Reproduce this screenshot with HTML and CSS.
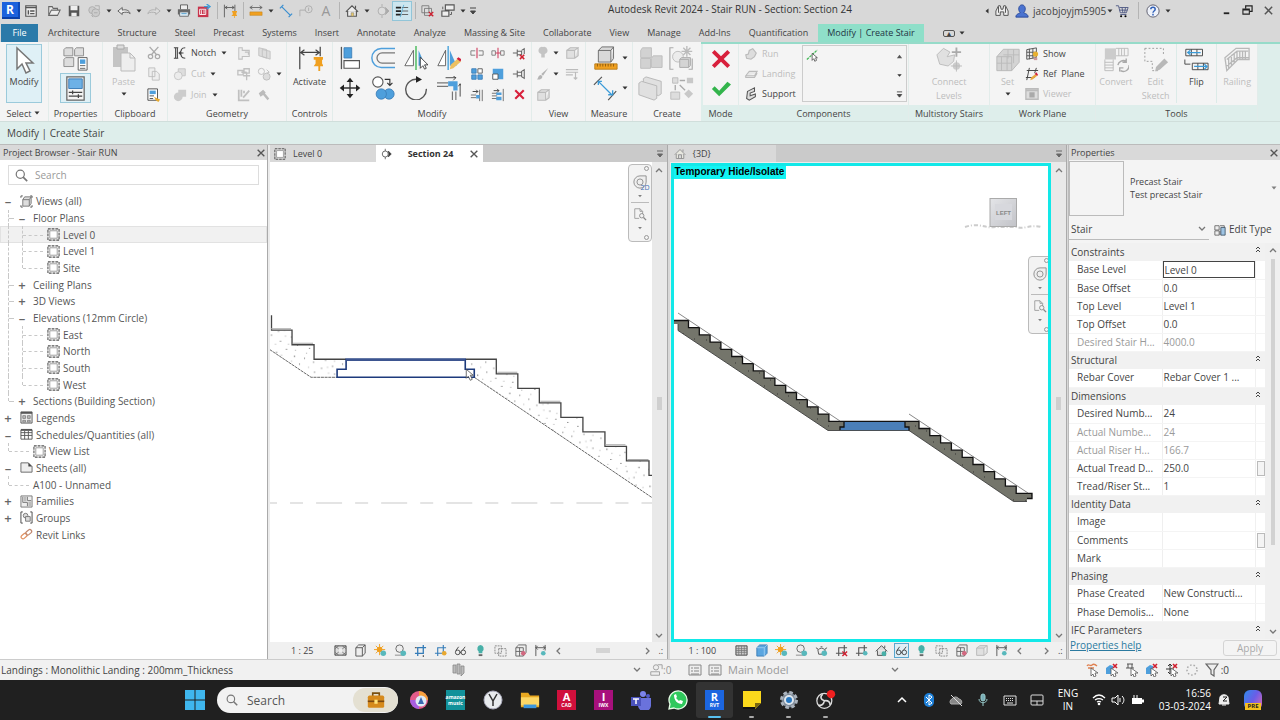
FILE: index.html
```html
<!DOCTYPE html>
<html lang="en">
<head>
<meta charset="utf-8">
<title>Autodesk Revit 2024 - Stair RUN</title>
<link rel="stylesheet" href="styles.css">
</head>
<body>
<svg class="defs" aria-hidden="true">
<defs>
<pattern id="concrete" width="43" height="37" patternUnits="userSpaceOnUse"><path d="M4 5h1M13 2h1M22 8h1M33 4h1M39 12h1M8 15h1M18 19h1M28 16h1M36 23h1M3 25h1M12 29h1M24 27h1M31 33h1M20 35h1M41 31h1" stroke="#555"/><path d="M9 9h1M17 11h1M27 3h1M37 17h1M5 20h1M23 22h1M14 24h1M33 28h1M7 34h1M40 6h1M26 34h1M30 11h1" stroke="#aaa"/></pattern>
<pattern id="aggregate" width="29" height="23" patternUnits="userSpaceOnUse"><rect width="29" height="23" fill="#74756b"/><path d="M4 5h1M15 12h1M22 3h1M9 18h1M26 17h1" stroke="#333"/></pattern>
<linearGradient id="cube" x2="1" y2="1"><stop stop-color="#e4e5e8"/><stop offset="1" stop-color="#c2c3c8"/></linearGradient>
</defs>
<symbol id="cursor" viewBox="0 0 20 28"><path d="M3 2v21l5-5 4 9 4-2-4-8h7z" fill="#fff" stroke="#777" stroke-width="1.500"/></symbol>
<symbol id="caret" viewBox="0 0 8 8"><path d="M1.500 2.500h5L4 5.500z" fill="#333"/></symbol>
<symbol id="caretup" viewBox="0 0 8 8"><path d="M1 6h6L4 2z" fill="#555"/></symbol>
<symbol id="caretbar" viewBox="0 0 8 8"><path d="M1 1h6M1.500 4h5L4 7z" fill="currentColor" stroke="currentColor"/></symbol>
<symbol id="home" viewBox="0 0 16 16"><path d="M3 8v6h10V8M1 9l7-7 7 7M12 5V2" fill="#eee" stroke="#555" stroke-width="1.300"/><path d="M7 10h3v4H7z" fill="#e9c96a" stroke="#777" stroke-width=".6"/></symbol>
<symbol id="homegrey" viewBox="0 0 16 16"><path d="M3 8v6h10V8M1 9l7-7 7 7M12 5V2M6 14v-5h4v5" fill="#e8e8df" stroke="#909090" stroke-width="1.200"/></symbol>
<symbol id="homet" viewBox="0 0 16 16"><path d="M3 8v6h10V8M1 9l7-7 7 7M12 5V2" fill="#ddd" stroke="#555" stroke-width="1.200"/><circle cx="11" cy="12" r="3" fill="#48b0a8"/></symbol>
<symbol id="win" viewBox="0 0 16 16"><path d="M2 2h12v12H2z" fill="#eee" stroke="#555" stroke-width="1.300"/><path d="M2 4h12M5 7v5M7 8h5M7 11h5" stroke="#555" stroke-width="1.600"/></symbol>
<symbol id="open" viewBox="0 0 16 16"><path d="M2 13V3h4l1 2h5v2M2 13L5 7h10l-3 6z" fill="#eee" stroke="#666" stroke-width="1.200"/></symbol>
<symbol id="save" viewBox="0 0 16 16"><path d="M2 2h12v12H2z" fill="#555"/><path d="M4 2h8v5H4zM5 10h6v4H5z" fill="#eee"/></symbol>
<symbol id="sync" viewBox="0 0 16 16"><circle cx="6" cy="7" r="4" fill="#ccc" stroke="#aaa"/><circle cx="10" cy="10" r="4.500" fill="#ccc" stroke="#aaa"/><path d="M9 2h5v5M5 13l2 2M8 10h4" stroke="#aaa" fill="none"/></symbol>
<symbol id="undo" viewBox="0 0 16 16"><path d="M1 8l5-4v3c4-1 8 0 9 4-2-2-5-2-9-1v2z" fill="#eee" stroke="#555"/></symbol>
<symbol id="redo" viewBox="0 0 16 16"><path d="M15 8l-5-4v3c-4-1-8 0-9 4 2-2 5-2 9-1v2z" fill="#ddd" stroke="#aaa"/></symbol>
<symbol id="print" viewBox="0 0 16 16"><path d="M4 6V1h8v5" fill="#eee" stroke="#555"/><path d="M1 6h14v6H1z" fill="#666"/><path d="M3 9h10v5H3z" fill="#ddeef8" stroke="#666"/><path d="M5 11h6" stroke="#4998c8"/></symbol>
<symbol id="pdf" viewBox="0 0 16 16"><path d="M1 3h12v12H1z" fill="#c8344c"/><path d="M3 6h7v6H3zM5 7v5M8 7v4" fill="none" stroke="#fff"/><path d="M8 3h5M11 0l4 3-4 3" stroke="#3b9bd8" stroke-width="1.500" fill="none"/></symbol>
<symbol id="dim" viewBox="0 0 20 20"><path d="M2 1v18M17 1v9M3 5h13M6 3L3 5l3 2M13 3l3 2-3 2" fill="none" stroke="#555" stroke-width="1.200"/><path d="M13 10h7v2h-1v3l2 2h-9l2-2v-3h-1zM16 17h1v3h-1z" fill="#f0a020"/></symbol>
<symbol id="measure" viewBox="0 0 16 16"><path d="M1 4h14M4 2L1 4l3 2M12 2l3 2-3 2" stroke="#666" fill="none"/><path d="M1 9h14v4H1z" fill="#f0a020" stroke="#b77b18" stroke-width=".5"/></symbol>
<symbol id="aligned" viewBox="0 0 16 16"><path d="M1 5l4-4M3 3l10 10M11 15l4-4" stroke="#3b8fd0" stroke-width="1.400" fill="none"/></symbol>
<symbol id="tag" viewBox="0 0 16 16"><circle cx="11" cy="6" r="4" fill="none" stroke="#aaa"/><path d="M1 14V7h6M11 4v4" stroke="#aaa" fill="none"/></symbol>
<symbol id="marker" viewBox="0 0 16 16"><circle cx="8" cy="8" r="4.500" fill="#ddd" stroke="#aaa"/><path d="M8 0v3M8 13v3M12 4l4 4-4 4 1-4z" fill="#aaa" stroke="#aaa"/></symbol>
<symbol id="section" viewBox="0 0 16 16"><circle cx="7" cy="8" r="4" fill="#fff" stroke="#444"/><path d="M7 1v3M7 12v3M11 4l4 4-4 4 1-4z" fill="#333" stroke="#444"/></symbol>
<symbol id="thin" viewBox="0 0 16 16"><path d="M1 4h6M1 8h6M1 12h6" stroke="#222" stroke-width="2"/><path d="M8 4h7M8 8h7M8 12h7" stroke="#555"/><path d="M10 1L6 15" stroke="#5bb0d8"/></symbol>
<symbol id="closewin" viewBox="0 0 16 16"><path d="M1 2h8v8H1zM4 5h8v8H4z" fill="#ddd" stroke="#777"/><path d="M9 9l5 5M14 9l-5 5" stroke="#d02030" stroke-width="1.600"/></symbol>
<symbol id="switch" viewBox="0 0 16 16"><path d="M5 1h10v6H5zM1 8h8v6H1z" fill="#eee" stroke="#555" stroke-width="1.300"/><path d="M2 6V3M12 9v3h-2" stroke="#555" fill="none"/></symbol>
<symbol id="binoc" viewBox="0 0 16 16"><path d="M1 13V8l3-6h2l1 4h2l1-4h2l3 6v5h-5V9H6v4zM4 3v7M12 3v7" fill="#eee" stroke="#444"/></symbol>
<symbol id="user" viewBox="0 0 16 16"><path d="M1 15c0-4 4-4 5-5C3 7 4 1 8 1s5 6 2 9c1 1 5 1 5 5z" fill="#4b73d0" stroke="#284898"/></symbol>
<symbol id="cart" viewBox="0 0 16 16"><path d="M1 2h3l2 8h7l2-6H5M6 12h7M5 7h9M8 4l1 6M12 4l-1 6" fill="none" stroke="#4a5580"/><circle cx="7" cy="14" r="1.200"/><circle cx="12" cy="14" r="1.200"/></symbol>
<symbol id="help" viewBox="0 0 16 16"><circle cx="8" cy="8" r="7" fill="#eef2fa" stroke="#556" /><path d="M5.500 6c0-3 5-3 5 0 0 2-2.500 2-2.500 4M8 11v2" fill="none" stroke="#3060b8" stroke-width="1.700"/></symbol>
<symbol id="min" viewBox="0 0 12 12"><path d="M3 9h6" stroke="#222" stroke-width="2"/></symbol>
<symbol id="restore" viewBox="0 0 12 12"><path d="M4 4V1h7v6H8" fill="none" stroke="#222" stroke-width="1.300"/><path d="M1 4.500h7V10H1zM1 5.500h7" fill="none" stroke="#222" stroke-width="1.200"/></symbol>
<symbol id="x" viewBox="0 0 12 12"><path d="M2 2l8 8M10 2l-8 8" stroke="#555" stroke-width="1.600"/></symbol>
<symbol id="types" viewBox="0 0 28 28"><path d="M1 4l2-2h8v9H1zM13 4l2-2h8v9H13zM1 15l2-2h9v10H1z" fill="#ddd" stroke="#888"/><path d="M17 13h10v14H17z" fill="#fff" stroke="#555"/><path d="M19 15h6v5h-6z" fill="#4e9fdc"/><path d="M19 22h6M19 25h6" stroke="#555"/></symbol>
<symbol id="props" viewBox="0 0 20 26"><path d="M1 1h18v24H1z" fill="#f4f4f4" stroke="#666" stroke-width="1.300"/><path d="M3 3h14v10H3z" fill="#6db1e6" stroke="#3d7eb8"/><path d="M3 17h14M3 21h14M7 15v4M13 19v4" stroke="#444" stroke-width="1.300"/></symbol>
<symbol id="paste" viewBox="0 0 24 28"><path d="M1 3h15v20H1z" fill="#c4c4c4"/><path d="M5 1h7v4H5z" fill="#ddd" stroke="#aaa"/><path d="M9 9h9l5 5v13H9z" fill="#eee" stroke="#bbb"/><path d="M18 9v5h5" fill="none" stroke="#bbb"/></symbol>
<symbol id="cut" viewBox="0 0 16 16"><path d="M3 1l8 9M13 1L5 10" stroke="#aaa" stroke-width="1.500"/><circle cx="4" cy="12" r="2.500" fill="none" stroke="#aaa" stroke-width="1.400"/><circle cx="12" cy="12" r="2.500" fill="none" stroke="#aaa" stroke-width="1.400"/></symbol>
<symbol id="copyg" viewBox="0 0 16 16"><path d="M2 1h7v10H2zM6 5h5l3 3v7H6z" fill="#eee" stroke="#bbb"/></symbol>
<symbol id="matchp" viewBox="0 0 16 16"><path d="M1 1h11v13H1z" fill="#fff" stroke="#444"/><path d="M3 3h7v4H3z" fill="#4e9fdc"/><path d="M3 9h5M3 12h4" stroke="#444"/><path d="M8 10l4 2 3 1-2 3-3-2z" fill="#e8aa30"/></symbol>
<symbol id="notch" viewBox="0 0 16 16"><path d="M1 2h5M1 14h5M3 2v12M5 2v12M14 2c-5 0-5 3-5 6s0 6 5 6M12 8H7M10 5L7 8l3 3" fill="none" stroke="#444" stroke-width="1.200"/></symbol>
<symbol id="boolg" viewBox="0 0 16 16"><path d="M6 2h8v8H6z" fill="#ddd" stroke="#c4c4c4"/><circle cx="6" cy="10" r="4.500" fill="#ececec" stroke="#c4c4c4"/></symbol>
<symbol id="joing" viewBox="0 0 16 16"><path d="M6 2h9v8h-4a5 5 0 1 1-5-5z" fill="#ccc"/></symbol>
<symbol id="cope" viewBox="0 0 16 16"><path d="M2 2h4v3h8v7H6v3H2zM9 7h4v3" fill="#eee" stroke="#c0c0c0" stroke-width="1.200"/></symbol>
<symbol id="planes" viewBox="0 0 16 16"><path d="M2 2l9 2v10l-9-3zM6 4l9 2v9l-9-3z" fill="#ddd" stroke="#c0c0c0"/></symbol>
<symbol id="wallj" viewBox="0 0 16 16"><path d="M1 4h6v5H1zM8 2h6v5H8zM7 10h8M5 6h6M11 6v9" fill="none" stroke="#c0c0c0" stroke-width="1.500"/></symbol>
<symbol id="split" viewBox="0 0 16 16"><circle cx="5" cy="5" r="3.500" fill="none" stroke="#bbb"/><circle cx="11" cy="11" r="4" fill="#ddd" stroke="#bbb"/><path d="M11 3l3 3-3 1" stroke="#bbb" fill="none"/></symbol>
<symbol id="paint" viewBox="0 0 16 16"><path d="M2 2v12h12M5 2v8M14 3l-7 8M8 3v3" stroke="#c0c0c0" stroke-width="2" fill="none"/></symbol>
<symbol id="hammer" viewBox="0 0 16 16"><path d="M2 6l5-4 3 3-1 1 5 6-2 2-5-6-3 2z" fill="#bbb"/></symbol>
<symbol id="pinact" viewBox="0 0 28 28"><path d="M3 2v24M25 2v10M4 8h20M8 5L4 8l4 3M20 5l4 3-4 3" fill="none" stroke="#444" stroke-width="1.300"/><path d="M18 13h11v3h-2v4l2 3H18l2-3v-4h-2zM23 23h2v5h-2z" fill="#f0a020"/></symbol>
<symbol id="align" viewBox="0 0 28 28"><path d="M4 1v26" stroke="#555" stroke-width="1.500"/><path d="M7 2h9v12H7z" fill="#4e9fdc" stroke="#3d7eb8"/><path d="M7 17h18v9H7z" fill="#fff" stroke="#555" stroke-width="1.300"/></symbol>
<symbol id="offset" viewBox="0 0 28 28"><path d="M28 3H12a11 11 0 0 0 0 22h16" fill="none" stroke="#4e9fdc" stroke-width="1.700"/><path d="M28 8H13a6 6 0 0 0 0 12h15" fill="none" stroke="#777" stroke-width="1.500"/></symbol>
<symbol id="mirror" viewBox="0 0 28 28"><path d="M11 5v18H1z" fill="#fff" stroke="#555"/><path d="M17 5v18h8z" fill="#4e9fdc"/><path d="M14 0v28" stroke="#35b44c" stroke-width="1.500"/><path d="M19 13v13l3-3 2 4 2-1-2-4h4z" fill="#fff" stroke="#333"/></symbol>
<symbol id="mirrord" viewBox="0 0 28 28"><path d="M10 5v18H1z" fill="#fff" stroke="#555"/><path d="M15 5v18h8z" fill="#4e9fdc"/><path d="M13 0v28" stroke="#3b9bd8" stroke-width="1.500"/><path d="M15 27l1-5 8-7 4 3-9 8z" fill="#edc060"/><path d="M23 15l2-2 4 3-2 2z" fill="#d02040"/></symbol>
<symbol id="move" viewBox="0 0 28 28"><path d="M14 4v20M4 14h20" stroke="#333" stroke-width="1.500"/><path d="M14 2l4 5h-8zM14 26l4-5h-8zM2 14l5-4v8zM26 14l-5-4v8z" fill="#222"/></symbol>
<symbol id="copy" viewBox="0 0 28 28"><circle cx="8" cy="7" r="6" fill="#fff" stroke="#555" stroke-width="1.300"/><circle cx="21" cy="21" r="6" fill="#4e9fdc" stroke="#3d7eb8"/><circle cx="12" cy="21" r="6" fill="#4e9fdc" stroke="#3d7eb8"/><path d="M16 4h6v6M19 8l3 3 3-3" fill="none" stroke="#333" stroke-width="1.300"/></symbol>
<symbol id="rotate" viewBox="0 0 28 28"><path d="M16 4a12 12 0 1 0 10 11" fill="none" stroke="#555" stroke-width="1.600"/><path d="M14 0l7 4-7 4z" fill="#222"/></symbol>
<symbol id="trim" viewBox="0 0 28 28"><path d="M0 8h13M0 12h13M18 28V18M22 28V18" stroke="#777" stroke-width="1.400"/><path d="M13 6h11v11h-5v-5h-6z" fill="#4e9fdc"/><path d="M10 2h12M19 0l3 2-3 3M27 24V10M25 12l2-3 2 3" fill="none" stroke="#333"/></symbol>
<symbol id="splitel" viewBox="0 0 16 16"><path d="M6 5.500H1v5h5M10 5.500h5v5h-5" fill="none" stroke="#777"/><path d="M8 2v12" stroke="#d04060" stroke-width="1.300"/></symbol>
<symbol id="splitgap" viewBox="0 0 16 16"><path d="M5 5.500H1v5h4zM11 5.500h4v5h-4z" fill="none" stroke="#777"/><path d="M8 2v12M5 8h6" stroke="#d04060" stroke-width="1.200"/></symbol>
<symbol id="pin" viewBox="0 0 16 16"><path d="M1 8h5M6 4v8M6 6h5v4H6M11 5l3-2v10l-3-2z" fill="none" stroke="#666" stroke-width="1.200"/></symbol>
<symbol id="unpin" viewBox="0 0 16 16"><path d="M1 8h5M6 4v8M6 6h5v4H6M11 5l3-2v6" fill="none" stroke="#666" stroke-width="1.200"/><path d="M9 10l5 5M14 10l-5 5" stroke="#d02030" stroke-width="1.700"/></symbol>
<symbol id="array" viewBox="0 0 16 16"><path d="M2 2h5v5H2zM2 9h5v5H2zM9 9h5v5H9z" fill="#4e9fdc" stroke="#3d7eb8"/><path d="M9 2h5v5H9z" fill="#fff" stroke="#555"/></symbol>
<symbol id="scale" viewBox="0 0 16 16"><path d="M2 2h12v12H2z" fill="#4e9fdc"/><path d="M2 8h6v6H2z" fill="#fff" stroke="#555"/></symbol>
<symbol id="trim1" viewBox="0 0 16 16"><path d="M1 8h6M1 11h6M14 2v13M11 2v13" stroke="#666"/><path d="M7 8h4v4H7z" fill="#4e9fdc"/><path d="M3 4h6M7 2l2 2-2 2" fill="none" stroke="#333"/></symbol>
<symbol id="trim2" viewBox="0 0 16 16"><path d="M1 6h6M1 9h6M1 12h6M14 1v14" stroke="#666"/><path d="M6 5h6v3H6zM6 10h6v4H6z" fill="#4e9fdc"/><path d="M3 3h6M7 1l2 2-2 2" fill="none" stroke="#333"/></symbol>
<symbol id="redx" viewBox="0 0 22 22"><path d="M1 4l3-3 7 7 7-7 3 3-7 7 7 7-3 3-7-7-7 7-3-3 7-7z" fill="#d8203c"/></symbol>
<symbol id="check" viewBox="0 0 22 18"><path d="M1 9l3-3 5 5L18 1l4 3L9 17z" fill="#33b44c"/></symbol>
<symbol id="bulbg" viewBox="0 0 16 16"><path d="M8 1a4 4 0 0 0-2 8v4h4V9a4 4 0 0 0-2-8z" fill="#c4c4c4"/></symbol>
<symbol id="boxg" viewBox="0 0 16 16"><path d="M2 5h9v9H2zM2 5l4-3h9l-4 3M15 2v9l-4 3" fill="#e0e0e0" stroke="#bbb" stroke-width="1.200"/></symbol>
<symbol id="brushg" viewBox="0 0 16 16"><path d="M14 1L6 8l2 2zM5 9c-3 1-2 4-4 5 4 1 7-1 6-4z" fill="#b4b4b4"/></symbol>
<symbol id="linesg" viewBox="0 0 16 16"><path d="M1 3h14M1 6h14M1 9h8M12 6v8M10 12l2 2 2-2" fill="none" stroke="#bbb" stroke-width="1.300"/></symbol>
<symbol id="ruler" viewBox="0 0 28 28"><path d="M6 5h14v13H6zM6 5l4-4h13l-3 4M23 1v13l-3 4" fill="#d9d9d9" stroke="#666"/><path d="M2 20h25v6H2z" fill="#f0a020" stroke="#b87a18"/><path d="M5 20v3M8 20v3M11 20v3M14 20v3M17 20v3M20 20v3M23 20v3" stroke="#8c5a10"/></symbol>
<symbol id="dimal" viewBox="0 0 28 28"><path d="M1 10L10 1M17 27l9-10" stroke="#555" stroke-width="1.300"/><path d="M6 6l15 15M6 10V6h4M17 21h5v-5" fill="none" stroke="#3b9bd8" stroke-width="1.500"/></symbol>
<symbol id="groupg" viewBox="0 0 28 28"><path d="M3 5l2-3h10v11H3zM3 14h11v11H3zM15 14l2-3h10v13H15z" fill="#d2d2d2" stroke="#bcbcbc"/></symbol>
<symbol id="sunbox" viewBox="0 0 28 28"><path d="M5 2H1v24h4M22 26h4V14" fill="none" stroke="#aaa" stroke-width="1.300"/><circle cx="10" cy="12" r="6" fill="#ececec" stroke="#bbb"/><path d="M12 15h10v9H12zM12 15l2-2h10v9l-2 2" fill="#d4d4d4" stroke="#aaa"/><path d="M20 0v12M14 6h12M16 2l8 8M24 2l-8 8" stroke="#bbb" stroke-width="1.500"/></symbol>
<symbol id="slabg" viewBox="0 0 28 28"><path d="M6 3l3-2 17 5v14l-3 2L6 16z" fill="#e0e0e0" stroke="#b4b4b4"/><path d="M1 8l3-2 17 5v14l-3 2L1 21z" fill="#e0e0e0" stroke="#b4b4b4"/></symbol>
<symbol id="flow" viewBox="0 0 28 28"><path d="M4 2h6v6H4zM2 18h10v8H2z" fill="#ddd" stroke="#bbb"/><path d="M20 2h7v6h-7zM22 15l5 5-5 5-5-5z" fill="#c8c8c8"/><path d="M12 5h6M7 10v6M12 10l6 6" stroke="#aaa" stroke-width="1.500"/></symbol>
<symbol id="rung" viewBox="0 0 16 16"><path d="M2 9l3-1 1-4 4-2 4 5-2 4-4 3-5-1z" fill="#ddd" stroke="#bbb" stroke-width="1.300"/></symbol>
<symbol id="landg" viewBox="0 0 16 16"><path d="M2 10l4-5h9l-3 5zM2 10v2h10l3-5" fill="#e8e8e8" stroke="#bbb" stroke-width="1.200"/></symbol>
<symbol id="support" viewBox="0 0 16 16"><path d="M4 5l8-4v4L7 7v3l6-2v3l-7 4-3-2z" fill="#ddd" stroke="#555" stroke-width="1.200"/></symbol>
<symbol id="sketch" viewBox="0 0 16 16"><path d="M1 12L13 1" stroke="#44b858" stroke-width="1.500" stroke-dasharray="3 1"/><path d="M7 5v8l2-2 1 3 2-1-1-3h2z" fill="#fff" stroke="#333" stroke-width=".8"/></symbol>
<symbol id="connect" viewBox="0 0 28 28"><path d="M1 9l7-7 7 4-3 5 8-2-1 7-6 5-9-2z" fill="#e0e0e0" stroke="#bbb"/><path d="M22 1v10M17 6h10" stroke="#aaa" stroke-width="2" fill="none"/><circle cx="22" cy="21" r="4" fill="#ccc"/><path d="M22 15v12M16 21h12" stroke="#bbb"/></symbol>
<symbol id="setg" viewBox="0 0 28 28"><path d="M2 11h16v15H2zM2 11l7-8h17v14l-8 9" fill="#d4d4d4" stroke="#b8b8b8"/><path d="M7 11v15M13 11v15M2 18h16M14 3v10M20 3v15M9 9h17" stroke="#bbb" fill="none"/></symbol>
<symbol id="show" viewBox="0 0 16 16"><path d="M2 3l11-2v11L2 14zM5 2v12M9 2v11M2 6h11M2 10h11" fill="none" stroke="#555" stroke-width="1.100"/><circle cx="12" cy="8" r="3" fill="#e8b030"/><path d="M10 12h4v3h-4z" fill="#c99"/></symbol>
<symbol id="refp" viewBox="0 0 16 16"><path d="M2 4h13M1 12h10M5 1L2 15M13 1l-2 6" fill="none" stroke="#444" stroke-width="1.100"/><path d="M6 15l1-3 5-4 2 2-5 4z" fill="#e9a840"/><path d="M11 8l2-2 2 3-1 1z" fill="#d02040"/></symbol>
<symbol id="viewer" viewBox="0 0 16 16"><path d="M1 2h14v12H1zM1 4h14" fill="#ddd" stroke="#bbb" stroke-width="1.500"/><path d="M5 6h6v6H5z" fill="#aaa"/></symbol>
<symbol id="convert" viewBox="0 0 28 28"><path d="M2 2h12v12H2z" fill="#ccc"/><path d="M14 2h13v8H14M17 2v8M20 2v8M23 2v8M2 14v12h9V14M2 17h9M2 20h9M2 23h9" fill="none" stroke="#bbb"/><path d="M16 20a6 6 0 0 1 9-4M28 20a6 6 0 0 1-9 6M25 13v4h-4M18 27v-4h4" fill="none" stroke="#aaa" stroke-width="1.500"/></symbol>
<symbol id="esketch" viewBox="0 0 28 28"><path d="M2 2h20v8M2 2v14h8v10h6" fill="none" stroke="#999" stroke-dasharray="2 2"/><path d="M13 27l1-5 9-9 4 4-9 8z" fill="#b8b8b8"/></symbol>
<symbol id="flip" viewBox="0 0 28 28"><path d="M3 3h18M3 10h18M3 3v7M9 3v7M15 3v7M21 3v7M10 18h17M10 25h17M10 18v7M16 18v7M22 18v7M27 18v7M2 14v5h6" fill="none" stroke="#444"/><path d="M5 6.500h14M8 4L5 6.500 8 9M12 21.500h14M23 19l3 2.500-3 3" fill="none" stroke="#3b9bd8" stroke-width="1.300"/></symbol>
<symbol id="railing" viewBox="0 0 28 28"><path d="M1 12L13 2h14v12H15L3 26zM3 14L14 5h12M3 21l11-9h13M5 12v12M8 9v12M11 7v11M14 5v9M17 5v9M20 5v9M23 5v9" fill="none" stroke="#b8b8b8" stroke-width="1.400"/></symbol>
<symbol id="glass" viewBox="0 0 16 16"><circle cx="6.500" cy="6.500" r="5" fill="none" stroke="#777" stroke-width="1.500"/><path d="M10 10l5 5" stroke="#777" stroke-width="2"/></symbol>
<symbol id="plan" viewBox="0 0 14 14"><path d="M1 1h12v12H1z" fill="none" stroke="#555" stroke-width="1.200" stroke-dasharray="3 1"/><path d="M3 3h8v8H3z" fill="#fff" stroke="#999"/></symbol>
<symbol id="views" viewBox="0 0 14 14"><path d="M3 1H1v2M11 1h2v2M1 11v2h2M13 11v2h-2" fill="none" stroke="#555"/><path d="M3 5l2-3h7v7l-2 3H3zM3 5h7v7M10 5l2-3" fill="#ddd" stroke="#777"/></symbol>
<symbol id="legend" viewBox="0 0 14 14"><path d="M1 1h12v12H1z" fill="#eee" stroke="#555"/><path d="M1 2h12" stroke="#555" stroke-width="2"/><path d="M3 5h3v3H3zM8 5h3v3H8zM3 10h3v2H3zM8 10h3v2H8z" fill="#bbb" stroke="#777" stroke-width=".8"/></symbol>
<symbol id="sched" viewBox="0 0 14 14"><path d="M1 2h12v10H1zM1 5h12M1 8h12M5 3v9M9 3v9" fill="none" stroke="#555"/><path d="M1 2h12" stroke="#555" stroke-width="2"/></symbol>
<symbol id="sheet" viewBox="0 0 14 14"><path d="M1 2h8l4 4v6H1z" fill="#eee" stroke="#666"/><path d="M9 2v4h4z" fill="#444"/></symbol>
<symbol id="family" viewBox="0 0 14 14"><path d="M1 1h12v12H1z" fill="#eee" stroke="#777"/><path d="M3 2v6h5v4M8 2v4h4" fill="none" stroke="#777"/><path d="M4 2h3v5H4zM9 7h3v5H9z" fill="#bbb"/></symbol>
<symbol id="groups" viewBox="0 0 14 14"><path d="M3 1H1v12h2M11 1h2v12h-2" fill="none" stroke="#444"/><circle cx="6" cy="5" r="2.500" fill="#ddd" stroke="#777"/><path d="M6 6h5v5H6z" fill="#ddd" stroke="#777"/></symbol>
<symbol id="links" viewBox="0 0 14 14"><rect x="1" y="7" width="7" height="4" rx="2" transform="rotate(-40 4 9)" fill="none" stroke="#e09060" stroke-width="1.300"/><rect x="6" y="3" width="7" height="4" rx="2" transform="rotate(-40 9 5)" fill="none" stroke="#c08870" stroke-width="1.300"/></symbol>
<symbol id="wheel" viewBox="0 0 16 16"><path d="M8 1h7v7a7 7 0 1 1-7-7z" fill="#eee" stroke="#888"/><circle cx="8" cy="8" r="3.500" fill="none" stroke="#888"/></symbol>
<symbol id="zoomr" viewBox="0 0 16 16"><path d="M7 13H2V2h6l3 3v3M8 2v3h3" fill="none" stroke="#999"/><circle cx="10" cy="10" r="2.500" fill="none" stroke="#888"/><path d="M12 12l3 3" stroke="#888" stroke-width="1.500"/></symbol>
<symbol id="edit" viewBox="0 0 14 14"><path d="M1 2h5v5H1zM1 8h5v5H1zM7 2h5v4M7 8v5" fill="#eee" stroke="#666"/><path d="M8 4h5v9H8z" fill="#9ec4e4" stroke="#456"/></symbol>
<symbol id="detail" viewBox="0 0 14 14"><path d="M1 2h12v10H1z" fill="#ddd" stroke="#444"/><path d="M1 2l12 10M13 2L1 12M1 5l4-3M13 5L9 2M1 9l4 3M13 9l-4 3" stroke="#666" stroke-width=".8"/><path d="M5 5h4v4H5z" fill="#eee"/></symbol>
<symbol id="fine" viewBox="0 0 14 14"><path d="M1 2h12v10H1z" fill="#ccc" stroke="#444"/><path d="M1 5h12M1 7h12M1 9h12M4 2v10M7 2v10M10 2v10" stroke="#777" stroke-width=".8"/></symbol>
<symbol id="mcube" viewBox="0 0 14 14"><path d="M2 4h7v9H2zM2 4l3-3h7v9l-3 3" fill="#eee" stroke="#555"/><path d="M9 4l3-3" stroke="#555"/></symbol>
<symbol id="bcube" viewBox="0 0 14 14"><path d="M2 4l3-3h8v9l-3 3H2z" fill="#5ba6e0" stroke="#3d7eb8"/><path d="M2 4h8v9M10 4l3-3" fill="none" stroke="#9cccf0"/></symbol>
<symbol id="sun" viewBox="0 0 14 14"><circle cx="6" cy="6" r="3" fill="#f0a020"/><path d="M6 0v12M0 6h12M2 2l8 8M10 2l-8 8" stroke="#f0a020"/><circle cx="10" cy="10" r="3" fill="#58b8bc"/></symbol>
<symbol id="shadow" viewBox="0 0 14 14"><circle cx="6" cy="5" r="4" fill="#eee" stroke="#666"/><path d="M1 12h10" stroke="#888"/><circle cx="10" cy="10" r="3" fill="#58b8bc"/></symbol>
<symbol id="teapot" viewBox="0 0 14 14"><path d="M1 4l3 2c1-2 5-2 6 0l3-2M3 6l1 5h6l1-5M6 3h2" fill="#eee" stroke="#555"/><circle cx="10" cy="10" r="3" fill="#58b8bc"/></symbol>
<symbol id="crop" viewBox="0 0 14 14"><path d="M4 13V4h9M1 10h9V1" fill="none" stroke="#357cb8" stroke-width="1.400"/><path d="M1 4h2M10 12v2" stroke="#333"/></symbol>
<symbol id="cropb" viewBox="0 0 14 14"><path d="M4 13V4h9M1 10h9V1" fill="none" stroke="#357cb8" stroke-width="1.200"/><circle cx="11" cy="10" r="2.500" fill="#e8a830"/></symbol>
<symbol id="cropx" viewBox="0 0 14 14"><path d="M4 13V4h9M1 10h9V1" fill="none" stroke="#555" stroke-width="1.200"/><path d="M8 8l5 5M13 8l-5 5" stroke="#d02030" stroke-width="1.500"/></symbol>
<symbol id="cropt" viewBox="0 0 14 14"><path d="M4 13V4h9M1 10h9V1" fill="none" stroke="#555" stroke-width="1.200"/><circle cx="11" cy="10" r="2.500" fill="#58b8bc"/></symbol>
<symbol id="specs" viewBox="0 0 14 14"><circle cx="4" cy="9" r="2.500" fill="none" stroke="#444"/><circle cx="10" cy="9" r="2.500" fill="none" stroke="#444"/><path d="M2 7l3-4M9 7l3-4M6 9h2" stroke="#444"/></symbol>
<symbol id="bulb" viewBox="0 0 14 14"><path d="M7 1a4 4 0 0 0-2 7v2h4V8a4 4 0 0 0-2-7z" fill="#48b0a8"/><path d="M5 12h4" stroke="#666" stroke-width="2"/></symbol>
<symbol id="temp" viewBox="0 0 14 14"><path d="M1 2h7v8H1zM5 5h8v8H5z" fill="#eee" stroke="#888" stroke-dasharray="2 1"/></symbol>
<symbol id="grid" viewBox="0 0 14 14"><path d="M2 4h8v9H2zM2 4l3-3h8v8l-3 4M2 8h8M6 4v9" fill="#eee" stroke="#666"/><circle cx="10" cy="10" r="2.500" fill="#d26880"/></symbol>
<symbol id="cons" viewBox="0 0 14 14"><path d="M2 1v12M12 1v6M2 4h10M4 2L2 4l2 2M10 2l2 2-2 2" fill="none" stroke="#555"/><circle cx="10" cy="10" r="2.500" fill="#58b8bc"/></symbol>
<symbol id="chd" viewBox="0 0 10 10"><path d="M2 3l3 3 3-3" fill="none" stroke="#777" stroke-width="1.300"/></symbol>
<symbol id="chu" viewBox="0 0 10 10"><path d="M2 7l3-3 3 3" fill="none" stroke="#777" stroke-width="1.300"/></symbol>
<symbol id="chl" viewBox="0 0 10 10"><path d="M6 2L3 5l3 3" fill="none" stroke="#777" stroke-width="1.300"/></symbol>
<symbol id="chr" viewBox="0 0 10 10"><path d="M4 2l3 3-3 3" fill="none" stroke="#777" stroke-width="1.300"/></symbol>
<symbol id="dbl" viewBox="0 0 8 8"><path d="M2 4l2-2 2 2M2 7l2-2 2 2" fill="none" stroke="#444"/></symbol>
<symbol id="hand" viewBox="0 0 14 14"><path d="M1 2h3v8H1zM5 1h3v10H5zM9 3h3v7l-3 3z" fill="#bbb" stroke="#888" stroke-width=".8"/></symbol>
<symbol id="people" viewBox="0 0 16 14"><circle cx="8" cy="4" r="3" fill="#eee" stroke="#999"/><path d="M2 13V9h10v4zM10 1h5v5" fill="#eee" stroke="#999"/></symbol>
<symbol id="list" viewBox="0 0 14 14"><path d="M1 2h12v10H1z" fill="#eee" stroke="#888"/><path d="M3 5h2M6 5h5M3 8h2M6 8h5M3 11h8" stroke="#888"/></symbol>
<symbol id="sel" viewBox="0 0 14 14"><path d="M2 3c2-3 3 1 5-1s4 0 5 1M3 5h6" fill="none" stroke="#e08050" stroke-width="1.300"/><path d="M6 5v8l2-2 1 3 2-1-1-3h3z" fill="#fff" stroke="#555" stroke-width=".8"/></symbol>
<symbol id="selpin" viewBox="0 0 14 14"><path d="M2 1h6M3 1v4M7 1v4M1 5h8" fill="none" stroke="#555"/><path d="M6 5v8l2-2 1 3 2-1-1-3h3z" fill="#fff" stroke="#555" stroke-width=".8"/></symbol>
<symbol id="selx" viewBox="0 0 14 14"><path d="M1 5l4-3 3 1v8H1z" fill="#4e9fdc"/><path d="M8 1l4 4M12 1L8 5" stroke="#d02030" stroke-width="1.600"/><path d="M6 5v8l2-2 1 3 2-1-1-3h3z" fill="#fff" stroke="#555" stroke-width=".8"/></symbol>
<symbol id="seldrag" viewBox="0 0 14 14"><path d="M5 1v10M1 6h8M3 3l2-2 2 2M3 9l2 2" fill="none" stroke="#333"/><path d="M8 1l4 4M12 1L8 5" stroke="#d02030" stroke-width="1.600"/><path d="M6 5v8l2-2 1 3 2-1-1-3h3z" fill="#fff" stroke="#555" stroke-width=".8"/></symbol>
<symbol id="dots" viewBox="0 0 14 14"><circle cx="7" cy="7" r="5" fill="none" stroke="#aaa" stroke-width="1.500" stroke-dasharray="1.500 2"/></symbol>
<symbol id="funnel" viewBox="0 0 14 14"><path d="M1 1h12L9 7v6l-3-2V7z" fill="#eee" stroke="#666" stroke-width="1.200"/></symbol>
<symbol id="windows" viewBox="0 0 20 20"><path d="M0 0h9.500v9.500H0zM10.500 0H20v9.500h-9.500zM0 10.500h9.500V20H0zM10.500 10.500H20V20h-9.500z" fill="#3fb6ee"/></symbol>
<symbol id="case" viewBox="0 0 22 20"><path d="M7 5V1h8v4" fill="none" stroke="#7a5010" stroke-width="2"/><rect x="1" y="4" width="20" height="15" rx="2" fill="#d68a1c"/><path d="M1 11h20" stroke="#7a4810" stroke-width="2"/><path d="M9 9h4v5H9z" fill="#ffe27a"/></symbol>
<symbol id="copilot" viewBox="0 0 20 20"><circle cx="10" cy="10" r="9" fill="#e35b8a"/><path d="M10 1a9 9 0 0 1 9 9h-9z" fill="#f6a13c"/><path d="M10 19a9 9 0 0 1-9-9h9z" fill="#a85de0"/><circle cx="12" cy="11" r="5.500" fill="#dfeaf6"/><path d="M9 14l3-7 3 7z" fill="#3a67b0"/></symbol>
<symbol id="clock" viewBox="0 0 20 20"><circle cx="10" cy="10" r="9" fill="#e8ebee" stroke="#aab"/><path d="M6 4l4 7 4-7M10 11v5" stroke="#333" stroke-width="1.500" fill="none"/></symbol>
<symbol id="folder" viewBox="0 0 22 20"><path d="M1 2h8l2 3h10v13H1z" fill="#e9a820"/><path d="M1 7h20v9H1z" fill="#fcd766"/><path d="M4 15h14v4H4z" fill="#3a96dd"/></symbol>
<symbol id="teams" viewBox="0 0 20 20"><circle cx="12" cy="4" r="3" fill="#7b83eb"/><circle cx="17" cy="6" r="2" fill="#5059c9"/><path d="M7 8h13v6a5 5 0 0 1-13 2z" fill="#6a72dc"/><path d="M0 7h10v9H0z" fill="#4b53bc"/><path d="M2 9h6M5 9v5" stroke="#fff" stroke-width="1.500"/></symbol>
<symbol id="whatsapp" viewBox="0 0 20 20"><path d="M1 19l1-5a9 9 0 1 1 4 4z" fill="#30c85c" stroke="#e8ffe8" stroke-width="1.300"/><path d="M6 5c0 5 3 9 8 9l1-3-3-1-1 1-3-3 1-1-1-3z" fill="#fff"/></symbol>
<symbol id="note" viewBox="0 0 20 20"><path d="M1 1h18v12l-6 6H1z" fill="#fbd91c"/><path d="M13 19v-6h6z" fill="#7b6810"/><path d="M1 17h12v2H1z" fill="#111"/></symbol>
<symbol id="gear" viewBox="0 0 20 20"><circle cx="10" cy="10" r="7.500" fill="#7c8794" stroke="#aab3bd" stroke-width="3" stroke-dasharray="3.500 2.400"/><circle cx="10" cy="10" r="4" fill="#2878c0" stroke="#dde6ee" stroke-width="2"/></symbol>
<symbol id="obs" viewBox="0 0 24 24"><circle cx="10" cy="13" r="9" fill="#222" stroke="#ddd" stroke-width="1.500"/><path d="M10 13c-5-2-5-5-2-8M10 13c5-1 7 2 7 5M10 13c-1 5-4 6-7 5" fill="none" stroke="#ddd" stroke-width="2"/><circle cx="18" cy="5" r="5" fill="#f02020"/></symbol>
<symbol id="up" viewBox="0 0 14 14"><path d="M3 9l4-4 4 4" fill="none" stroke="#fff" stroke-width="1.500"/></symbol>
<symbol id="bt" viewBox="0 0 14 14"><rect x="2" width="10" height="14" rx="5" fill="#1e80d8"/><path d="M4 4l6 6-3 2V2l3 2-6 6" fill="none" stroke="#fff"/></symbol>
<symbol id="cloud" viewBox="0 0 14 14"><path d="M2 11a3 3 0 0 1 1-5 4 4 0 0 1 7 0 3 3 0 0 1 2 5z" fill="#888" stroke="#aaa"/><path d="M2 2l11 11" stroke="#ddd"/></symbol>
<symbol id="mic" viewBox="0 0 14 14"><rect x="5" y="1" width="4" height="7" rx="2" fill="#79aeb8" stroke="#9cc"/><path d="M3 6c0 5 8 5 8 0M7 10v3" fill="none" stroke="#9cc"/></symbol>
<symbol id="kbd" viewBox="0 0 14 14"><path d="M1 3h12v9H1z" fill="none" stroke="#ddd"/><path d="M3 5.500h8M3 7.500h8" stroke="#ddd" stroke-dasharray="1 1"/><path d="M4 10h6" stroke="#ddd"/></symbol>
<symbol id="pad" viewBox="0 0 14 14"><rect x="1" y="2" width="12" height="10" rx="1" fill="none" stroke="#ddd"/><path d="M1 8h12M7 8v4" stroke="#ddd"/></symbol>
<symbol id="wifi" viewBox="0 0 14 14"><path d="M1 5c4-4 8-4 12 0M3 7c3-2 5-2 8 0M5 9c2-1 2-1 4 0" fill="none" stroke="#fff" stroke-width="1.300"/><circle cx="7" cy="11" r="1.300" fill="#fff"/></symbol>
<symbol id="vol" viewBox="0 0 14 14"><path d="M1 5h3l3-3v10L4 9H1zM9 5v4M11 3c3 3 2 6 0 8" fill="none" stroke="#fff"/></symbol>
<symbol id="batt" viewBox="0 0 14 14"><path d="M2 5h10v6H2z" fill="#fff"/><path d="M12 7h2v2h-2zM4 2v5M7 2v5" stroke="#fff" fill="#fff"/></symbol>
<symbol id="bell" viewBox="0 0 14 14"><path d="M2 11l1-7c1-3 7-3 8 0l1 7zM5 12h4" fill="#eee" stroke="#eee"/><path d="M6 4h4L6 8h4" fill="none" stroke="#222"/></symbol>
</svg>

<header class="titlebar">
  <div class="qat">
    <button class="logo" aria-label="Revit">R</button>
    <button class="q home" aria-label="Home"><svg><use href="#win"/></svg></button>
    <button class="q" aria-label="Open"><svg><use href="#open"/></svg></button>
    <button class="q" aria-label="Save"><svg><use href="#save"/></svg></button>
    <button class="q" aria-label="Synchronize"><svg><use href="#sync"/></svg></button>
    <button class="c" aria-label="Synchronize options"><svg><use href="#caret"/></svg></button>
    <button class="q" aria-label="Undo"><svg><use href="#undo"/></svg></button>
    <button class="c" aria-label="Undo list"><svg><use href="#caret"/></svg></button>
    <button class="q" aria-label="Redo"><svg><use href="#redo"/></svg></button>
    <button class="c" aria-label="Redo list"><svg><use href="#caret"/></svg></button>
    <button class="q" aria-label="Print"><svg><use href="#print"/></svg></button>
    <button class="q" aria-label="Export PDF"><svg><use href="#pdf"/></svg></button>
    <i class="sep"></i>
    <button class="q" aria-label="Activate controls"><svg><use href="#dim"/></svg></button>
    <i class="sep"></i>
    <button class="q" aria-label="Measure"><svg><use href="#measure"/></svg></button>
    <button class="c" aria-label="Measure options"><svg><use href="#caret"/></svg></button>
    <button class="q" aria-label="Aligned dimension"><svg><use href="#aligned"/></svg></button>
    <button class="q" aria-label="Tag"><svg><use href="#tag"/></svg></button>
    <button class="q letter" aria-label="Text">A</button>
    <i class="sep"></i>
    <button class="q" aria-label="Default 3D view"><svg><use href="#home"/></svg></button>
    <button class="c" aria-label="3D view options"><svg><use href="#caret"/></svg></button>
    <button class="q" aria-label="Section"><svg><use href="#marker"/></svg></button>
    <button class="q on" aria-label="Thin lines"><svg><use href="#thin"/></svg></button>
    <i class="sep"></i>
    <button class="q" aria-label="Close inactive views"><svg><use href="#closewin"/></svg></button>
    <button class="q" aria-label="Switch windows"><svg><use href="#switch"/></svg></button>
    <button class="c" aria-label="Window list"><svg><use href="#caret"/></svg></button>
    <button class="c" aria-label="Customize"><svg><use href="#caretbar"/></svg></button>
  </div>
  <h1>Autodesk Revit 2024 - Stair RUN - Section: Section 24</h1>
  <div class="account">
    <button class="c left" aria-label="Collapse search"><svg><use href="#caret"/></svg></button>
    <button class="q" aria-label="Search help"><svg><use href="#binoc"/></svg></button>
    <button class="q" aria-label="Account"><svg><use href="#user"/></svg></button>
    <button class="name">jacobjoyjm5905<svg class="cr"><use href="#caret"/></svg></button>
    <button class="q" aria-label="App store"><svg><use href="#cart"/></svg></button>
    <i class="sep"></i>
    <button class="q help" aria-label="Help"><svg><use href="#help"/></svg></button>
    <button class="c" aria-label="Help options"><svg><use href="#caret"/></svg></button>
  </div>
  <div class="winctl">
    <button aria-label="Minimize"><svg><use href="#min"/></svg></button>
    <button aria-label="Restore"><svg><use href="#restore"/></svg></button>
    <button aria-label="Close"><svg><use href="#x"/></svg></button>
  </div>
</header>

<nav class="tabs">
  <button class="file">File</button><button>Architecture</button><button>Structure</button><button>Steel</button><button>Precast</button><button>Systems</button><button>Insert</button><button>Annotate</button><button>Analyze</button><button>Massing &amp; Site</button><button>Collaborate</button><button>View</button><button>Manage</button><button>Add-Ins</button><button>Quantification</button><button class="active">Modify | Create Stair</button>
  <button class="ribmode" aria-label="Ribbon display"><span>▴</span><svg><use href="#caret"/></svg></button>
</nav>

<section class="ribbon">
  <div class="panel p-select"><div class="body"><button class="big on"><svg><use href="#cursor"/></svg>Modify</button></div><h2>Select <svg><use href="#caret"/></svg></h2></div>
  <div class="panel p-props"><div class="body stack"><button aria-label="Type properties"><svg class="i26"><use href="#types"/></svg></button><button class="lit" aria-label="Properties"><svg class="i26"><use href="#props"/></svg></button></div><h2>Properties</h2></div>
  <div class="panel p-clip"><div class="body"><button class="big off"><svg><use href="#paste"/></svg>Paste<svg class="cr"><use href="#caret"/></svg></button><div class="smalls"><button aria-label="Cut to clipboard"><svg><use href="#cut"/></svg></button><button aria-label="Copy to clipboard"><svg><use href="#copyg"/></svg></button><button aria-label="Match type"><svg><use href="#matchp"/></svg></button></div></div><h2>Clipboard</h2></div>
  <div class="panel p-geo"><div class="body"><div class="smalls wide"><button><svg><use href="#notch"/></svg>Notch<svg class="cr"><use href="#caret"/></svg></button><button class="off"><svg><use href="#boolg"/></svg>Cut<svg class="cr"><use href="#caret"/></svg></button><button class="off"><svg><use href="#joing"/></svg>Join<svg class="cr"><use href="#caret"/></svg></button></div><div class="smalls"><button aria-label="Cope"><svg><use href="#cope"/></svg></button><button aria-label="Wall joins"><svg><use href="#wallj"/></svg></button><button aria-label="Beam joins"><svg><use href="#paint"/></svg></button></div><div class="smalls"><button aria-label="Split face"><svg><use href="#planes"/></svg></button><button aria-label="Paint"><svg><use href="#split"/></svg></button><button aria-label="Demolish"><svg><use href="#hammer"/></svg></button></div><svg class="cr mid"><use href="#caret"/></svg></div><h2>Geometry</h2></div>
  <div class="panel p-ctl"><div class="body"><button class="big"><svg><use href="#pinact"/></svg>Activate</button></div><h2>Controls</h2></div>
  <div class="panel p-mod"><div class="body"><div class="large4"><button aria-label="Align"><svg><use href="#align"/></svg></button><button aria-label="Offset"><svg><use href="#offset"/></svg></button><button aria-label="Mirror pick axis"><svg><use href="#mirror"/></svg></button><button aria-label="Mirror draw axis"><svg><use href="#mirrord"/></svg></button><button aria-label="Move"><svg><use href="#move"/></svg></button><button aria-label="Copy"><svg><use href="#copy"/></svg></button><button aria-label="Rotate"><svg><use href="#rotate"/></svg></button><button aria-label="Trim corner"><svg><use href="#trim"/></svg></button></div><div class="smalls three"><button aria-label="Split element"><svg><use href="#splitel"/></svg></button><button aria-label="Split with gap"><svg><use href="#splitgap"/></svg></button><button aria-label="Unpin"><svg><use href="#unpin"/></svg></button><button aria-label="Array"><svg><use href="#array"/></svg></button><button aria-label="Scale"><svg><use href="#scale"/></svg></button><button aria-label="Pin"><svg><use href="#pin"/></svg></button><button aria-label="Trim single"><svg><use href="#trim1"/></svg></button><button aria-label="Trim multiple"><svg><use href="#trim2"/></svg></button><button aria-label="Delete"><svg class="del"><use href="#redx"/></svg></button></div></div><h2>Modify</h2></div>
  <div class="panel p-view"><div class="body"><div class="smalls caret"><button aria-label="Hide"><svg><use href="#bulbg"/></svg><svg class="cr"><use href="#caret"/></svg></button><button aria-label="Override"><svg><use href="#brushg"/></svg><svg class="cr"><use href="#caret"/></svg></button><button aria-label="Displace"><svg><use href="#boxg"/></svg></button></div><div class="smalls"><button aria-label="Selection box"><svg><use href="#boxg"/></svg></button><button aria-label="Linework"><svg><use href="#linesg"/></svg></button></div></div><h2>View</h2></div>
  <div class="panel p-meas"><div class="body stack"><button aria-label="Measure"><svg class="i26"><use href="#ruler"/></svg><svg class="cr"><use href="#caret"/></svg></button><button aria-label="Dimension"><svg class="i26"><use href="#dimal"/></svg><svg class="cr"><use href="#caret"/></svg></button></div><h2>Measure</h2></div>
  <div class="panel p-create"><div class="body two"><button aria-label="Create assembly"><svg class="i26"><use href="#groupg"/></svg></button><button aria-label="Create similar"><svg class="i26"><use href="#sunbox"/></svg></button><button aria-label="Create parts"><svg class="i26"><use href="#slabg"/></svg></button><button aria-label="Create group"><svg class="i26"><use href="#flow"/></svg></button></div><h2>Create</h2></div>
  <div class="context">
    <div class="panel p-mode"><div class="body stack"><button aria-label="Cancel edit"><svg class="i22"><use href="#redx"/></svg></button><button aria-label="Finish edit"><svg class="i22"><use href="#check"/></svg></button></div><h2>Mode</h2></div>
    <div class="panel p-comp"><div class="body"><div class="smalls wide"><button class="off"><svg><use href="#rung"/></svg>Run</button><button class="off"><svg><use href="#landg"/></svg>Landing</button><button><svg><use href="#support"/></svg>Support</button></div><div class="gallery"><svg class="i16"><use href="#sketch"/></svg><div><svg><use href="#caretup"/></svg><svg><use href="#caret"/></svg><svg><use href="#caretbar"/></svg></div></div></div><h2>Components</h2></div>
    <div class="panel p-multi"><div class="body"><button class="big off"><svg><use href="#connect"/></svg>Connect<br>Levels</button></div><h2>Multistory Stairs</h2></div>
    <div class="panel p-work"><div class="body"><button class="big off"><svg><use href="#setg"/></svg>Set<svg class="cr"><use href="#caret"/></svg></button><div class="smalls wide"><button><svg><use href="#show"/></svg>Show</button><button><svg><use href="#refp"/></svg>Ref&nbsp; Plane</button><button class="off"><svg><use href="#viewer"/></svg>Viewer</button></div></div><h2>Work Plane</h2></div>
    <div class="panel p-tools"><div class="body"><button class="big off"><svg><use href="#convert"/></svg>Convert</button><button class="big off"><svg><use href="#esketch"/></svg>Edit<br>Sketch</button><button class="big div"><svg><use href="#flip"/></svg>Flip</button><button class="big off div"><svg><use href="#railing"/></svg>Railing</button></div><h2>Tools</h2></div>
  </div>
</section>
<div class="options">Modify | Create Stair</div>

<main>
  <aside class="browser">
    <div class="head"><h2>Project Browser - Stair RUN</h2><button aria-label="Close project browser"><svg><use href="#x"/></svg></button></div>
    <label class="search"><svg><use href="#glass"/></svg><input type="text" placeholder="Search" aria-label="Search project"></label>
    <ul class="tree">
      <li><b>–</b><svg><use href="#views"/></svg>Views (all)</li>
      <li><i class="g br"></i><b>–</b>Floor Plans</li>
      <li class="sel"><i class="g"></i><i class="g br w"></i><svg><use href="#plan"/></svg>Level 0</li>
      <li><i class="g"></i><i class="g br w"></i><svg><use href="#plan"/></svg>Level 1</li>
      <li><i class="g"></i><i class="g br w end"></i><svg><use href="#plan"/></svg>Site</li>
      <li><i class="g br"></i><b>+</b>Ceiling Plans</li>
      <li><i class="g br"></i><b>+</b>3D Views</li>
      <li><i class="g br"></i><b>–</b>Elevations (12mm Circle)</li>
      <li><i class="g"></i><i class="g br w"></i><svg><use href="#plan"/></svg>East</li>
      <li><i class="g"></i><i class="g br w"></i><svg><use href="#plan"/></svg>North</li>
      <li><i class="g"></i><i class="g br w"></i><svg><use href="#plan"/></svg>South</li>
      <li><i class="g"></i><i class="g br w end"></i><svg><use href="#plan"/></svg>West</li>
      <li><i class="g br end"></i><b>+</b>Sections (Building Section)</li>
      <li><b>+</b><svg><use href="#legend"/></svg>Legends</li>
      <li><b>–</b><svg><use href="#sched"/></svg>Schedules/Quantities (all)</li>
      <li><i class="g br w end"></i><svg><use href="#plan"/></svg>View List</li>
      <li><b>–</b><svg><use href="#sheet"/></svg>Sheets (all)</li>
      <li><i class="g br w end"></i>A100 - Unnamed</li>
      <li><b>+</b><svg><use href="#family"/></svg>Families</li>
      <li><b>+</b><svg><use href="#groups"/></svg>Groups</li>
      <li><b></b><svg><use href="#links"/></svg>Revit Links</li>
    </ul>
  </aside>

  <section class="view v1">
    <div class="vtabs"><button class="idle"><svg><use href="#plan"/></svg>Level 0</button><button class="cur"><svg><use href="#section"/></svg>Section 24<svg class="xx"><use href="#x"/></svg></button><svg class="more"><use href="#caretbar"/></svg></div>
    <div class="stage">
      <div class="canvas">
        <svg class="draw" viewBox="270 162 381 480" preserveAspectRatio="xMinYMin slice">
          <path d="M270 330H292V344.500H314V359H346V369H337V377H311L270 349zM465 359H496V373.500H517.500V388H539V402.500H560.500V417H582.500V431.500H604.500V446H626V460.500H648.500V475H652V498L474 377V369H465z" fill="url(#concrete)"/>
          <path d="M271.500 315V330.500M271 330H292V344.500H314V359H346M465 359H496V373.500H517.500V388H539V402.500H560.500V417H582.500V431.500H604.500V446H626V460.500H648.500V475H652" fill="none" stroke="#444" stroke-width="1.300"/>
          <path d="M271 328.500H291M293 343H313M497 372H517M540 401H560M605 444.500H625M627 459H648" stroke="#aaa"/>
          <path d="M270 349.500L311 377H337M474 377L652 497.500" fill="none" stroke="#444" stroke-width=".8" stroke-dasharray="3 .7"/>
          <path d="M346 359H465V369H474V377H337V369H346z" fill="#fff" stroke="#1d3a7c" stroke-width="1.600"/>
          <path d="M346 359.500H465" stroke="#3d5590" stroke-width="2.500"/>
          <path d="M466 369v9l2-2 2 4 2-1-2-4h3z" fill="#fff" stroke="#333" stroke-width=".7"/>
          <path d="M251 502.500H652" stroke="#dcdcdc" stroke-width="1.500" stroke-dasharray="26 13 13 13"/>
        </svg>
        <div class="nav"><i></i><button aria-label="2D wheel"><svg><use href="#wheel"/></svg><small>2D</small></button><svg class="cr"><use href="#caret"/></svg><hr><button aria-label="Zoom"><svg><use href="#zoomr"/></svg></button><svg class="cr"><use href="#caret"/></svg><i></i></div>
      </div>
      <div class="vs"><svg><use href="#chu"/></svg><span></span><svg><use href="#chd"/></svg></div>
    </div>
    <div class="vbar"><output>1 : 25</output><svg><use href="#detail"/></svg><svg><use href="#mcube"/></svg><svg><use href="#sun"/></svg><svg><use href="#shadow"/></svg><svg><use href="#crop"/></svg><svg><use href="#cropb"/></svg><svg><use href="#specs"/></svg><svg><use href="#bulb"/></svg><svg><use href="#temp"/></svg><svg><use href="#grid"/></svg><svg><use href="#cons"/></svg><div class="hs"><svg><use href="#chl"/></svg><span></span><svg><use href="#chr"/></svg></div><em>.:</em></div>
  </section>

  <section class="view v2">
    <div class="vtabs"><button class="idle"><svg><use href="#homegrey"/></svg>{3D}</button><svg class="more"><use href="#caretbar"/></svg></div>
    <div class="stage">
      <div class="canvas cyan">
        <svg class="draw" viewBox="673 166 375 473" preserveAspectRatio="xMinYMin slice">
          <path d="M673 320.500H687.500v7.200h10.800v7.200h10.800v7.200h10.800v7.200h10.800v7.200h10.800v7.200h10.800v7.200h10.800v7.200h10.800v7.200h10.800v7.200h10.800v7.200h10.800v7.200h10.800v7.200h10.800v7.200H843V427H839V430.500H827L677 330.500V324H673zM904 421.500H918v7.200h10.800v7.200h10.800v7.200h10.800v7.200h10.800v7.200h10.800v7.200h10.800v7.200h10.800v7.200h10.800v7.200h10.800v7.200H1031V498.500H1026V501.500H1012.500L908 430.500V427H904z" fill="url(#aggregate)"/>
          <path d="M843 422H904V427H908V430.500H839V427H843z" fill="#4b7fb8"/>
          <path d="M673 320.500H687.500v7.200h10.800v7.200h10.800v7.200h10.800v7.200h10.800v7.200h10.800v7.200h10.800v7.200h10.800v7.200h10.800v7.200h10.800v7.200h10.800v7.200h10.800v7.200h10.800v7.200h10.800v7.200H918v7.200h10.800v7.200h10.800v7.200h10.800v7.200h10.800v7.200h10.800v7.200h10.800v7.200h10.800v7.200h10.800v7.200h10.800v7.200H1031V498.500H1026M843 422V427H839V430M904 422V427H908V431" fill="none" stroke="#111" stroke-width="1.300"/>
          <path d="M677 324V330.500L827 430.500H908L1012.500 501.500H1026" fill="none" stroke="#333" stroke-width=".8"/>
          <path d="M677 313L839 421M908 414L1027 493" fill="none" stroke="#555" stroke-width=".7"/>
          <path d="M964 227c15-5 20 2 30 0h22c6 3 14-3 24 0" fill="none" stroke="#ccc" stroke-width="2" stroke-dasharray="4 2 1 2"/>
          <rect x="989" y="198.500" width="26.500" height="28" fill="url(#cube)" stroke="#aaa"/>
          <rect x="994" y="204" width="17" height="16" fill="#d7d8dd"/>
          <text class="cubetxt" x="1002.500" y="215" text-anchor="middle">LEFT</text>
        </svg>
        <strong>Temporary Hide/Isolate</strong>
        <div class="nav"><i></i><button aria-label="Steering wheel"><svg><use href="#wheel"/></svg></button><svg class="cr"><use href="#caret"/></svg><hr><button aria-label="Zoom"><svg><use href="#zoomr"/></svg></button><svg class="cr"><use href="#caret"/></svg><i></i></div>
      </div>
      <div class="vs"><svg><use href="#chu"/></svg><span></span><svg><use href="#chd"/></svg></div>
    </div>
    <div class="vbar"><output>1 : 100</output><svg><use href="#fine"/></svg><svg><use href="#bcube"/></svg><svg><use href="#sun"/></svg><svg><use href="#shadow"/></svg><svg><use href="#teapot"/></svg><svg><use href="#cropx"/></svg><svg><use href="#cropt"/></svg><svg><use href="#homet"/></svg><svg class="boxed"><use href="#specs"/></svg><svg><use href="#bulb"/></svg><svg><use href="#temp"/></svg><svg><use href="#grid"/></svg><svg><use href="#boxg"/></svg><svg><use href="#cons"/></svg><div class="hs"><svg><use href="#chl"/></svg><svg><use href="#chr"/></svg></div><em>.:</em></div>
  </section>

  <aside class="props">
    <div class="head"><h2>Properties</h2><button aria-label="Close properties"><svg><use href="#x"/></svg></button></div>
    <button class="type"><span class="thumb"></span><span>Precast Stair<br>Test precast Stair</span><svg><use href="#caret"/></svg></button>
    <div class="filter"><div class="pick"><select aria-label="Category"><option>Stair</option></select><svg><use href="#chd"/></svg></div><button><svg><use href="#edit"/></svg>Edit Type</button></div>
    <div class="gridwrap">
      <table>
        <tr class="grp"><th colspan="3">Constraints<svg><use href="#dbl"/></svg></th></tr>
        <tr><th>Base Level</th><td><input type="text" value="Level 0" aria-label="Base Level"></td><td></td></tr>
        <tr><th>Base Offset</th><td>0.0</td><td></td></tr>
        <tr><th>Top Level</th><td>Level 1</td><td></td></tr>
        <tr><th>Top Offset</th><td>0.0</td><td></td></tr>
        <tr class="ro"><th>Desired Stair H...</th><td>4000.0</td><td></td></tr>
        <tr class="grp"><th colspan="3">Structural<svg><use href="#dbl"/></svg></th></tr>
        <tr><th>Rebar Cover</th><td>Rebar Cover 1 ...</td><td></td></tr>
        <tr class="grp"><th colspan="3">Dimensions<svg><use href="#dbl"/></svg></th></tr>
        <tr><th>Desired Numb...</th><td>24</td><td></td></tr>
        <tr class="ro"><th>Actual Numbe...</th><td>24</td><td></td></tr>
        <tr class="ro"><th>Actual Riser H...</th><td>166.7</td><td></td></tr>
        <tr><th>Actual Tread D...</th><td>250.0</td><td><button aria-label="Associate tread depth"></button></td></tr>
        <tr><th>Tread/Riser St...</th><td>1</td><td></td></tr>
        <tr class="grp"><th colspan="3">Identity Data<svg><use href="#dbl"/></svg></th></tr>
        <tr><th>Image</th><td></td><td></td></tr>
        <tr><th>Comments</th><td></td><td><button aria-label="Associate comments"></button></td></tr>
        <tr><th>Mark</th><td></td><td></td></tr>
        <tr class="grp"><th colspan="3">Phasing<svg><use href="#dbl"/></svg></th></tr>
        <tr><th>Phase Created</th><td>New Constructi...</td><td></td></tr>
        <tr><th>Phase Demolis...</th><td>None</td><td></td></tr>
        <tr class="grp"><th colspan="3">IFC Parameters<svg><use href="#dbl"/></svg></th></tr>
      </table>
      <div class="ps"><svg><use href="#chu"/></svg><span></span><svg><use href="#chd"/></svg></div>
    </div>
    <div class="foot"><a href="#help-topic">Properties help</a><button disabled>Apply</button></div>
  </aside>
</main>

<footer class="status">
  <p>Landings : Monolithic Landing : 200mm_Thickness</p>
  <svg><use href="#hand"/></svg>
  <svg class="chev"><use href="#chd"/></svg>
  <span class="edit"><svg><use href="#people"/></svg>:0</span>
  <svg><use href="#list"/></svg><svg><use href="#list"/></svg>
  <div class="pick"><select aria-label="Design option"><option>Main Model</option></select><svg><use href="#chd"/></svg></div>
  <div class="sels"><svg><use href="#sel"/></svg><svg><use href="#selx"/></svg><svg><use href="#selpin"/></svg><svg><use href="#selx"/></svg><svg><use href="#seldrag"/></svg><svg><use href="#dots"/></svg><svg><use href="#funnel"/></svg>:0</div>
</footer>

<div class="taskbar">
  <div class="apps">
    <button aria-label="Start"><svg><use href="#windows"/></svg></button>
    <label class="tsearch"><svg><use href="#glass"/></svg><input type="text" placeholder="Search" aria-label="Search Windows"><span><svg><use href="#case"/></svg></span></label>
    <button aria-label="Copilot"><svg><use href="#copilot"/></svg></button>
    <button aria-label="Amazon"><span class="tile teal">amazon<br>music</span></button>
    <button aria-label="Clock"><svg><use href="#clock"/></svg></button>
    <button aria-label="Explorer"><svg><use href="#folder"/></svg></button>
    <button aria-label="AutoCAD"><span class="tile red">A<small>CAD</small></span></button>
    <button aria-label="InfraWorks"><span class="tile mag">I<small>IWX</small></span></button>
    <button aria-label="Teams"><svg><use href="#teams"/></svg></button>
    <button aria-label="WhatsApp"><svg><use href="#whatsapp"/></svg></button>
    <button class="run now" aria-label="Revit"><span class="tile blue">R<small>RVT</small></span></button>
    <button class="run" aria-label="Sticky notes"><svg><use href="#note"/></svg></button>
    <button class="run" aria-label="Settings"><svg><use href="#gear"/></svg></button>
    <button class="run" aria-label="OBS"><svg><use href="#obs"/></svg></button>
  </div>
  <div class="tray">
    <svg><use href="#up"/></svg><svg><use href="#bt"/></svg><svg><use href="#cloud"/></svg><svg><use href="#mic"/></svg><svg><use href="#kbd"/></svg><svg><use href="#pad"/></svg>
    <span class="lang">ENG<br>IN</span>
    <div class="net"><svg><use href="#wifi"/></svg><svg><use href="#vol"/></svg><svg><use href="#batt"/></svg></div>
    <time>16:56<br>03-03-2024</time>
    <svg class="bell"><use href="#bell"/></svg>
    <div class="pre"><small>PRE</small></div>
  </div>
</div>
</body>
</html>
```

FILE: styles.css
```css
* { box-sizing: border-box; }
body { margin: 0; min-height: 100vh; display: flex; flex-direction: column; overflow: hidden; font: 9px/12px "Open Sans", "Noto Sans", sans-serif; color: #444; background: #e9e9e9; }
button, input, select { font: inherit; color: inherit; border: 0; background: none; padding: 0; margin: 0; border-radius: 0; min-width: 0; }
button { display: flex; align-items: center; justify-content: center; }
select { appearance: none; }
h1, h2, p, ul { margin: 0; padding: 0; font-weight: 400; font-size: inherit; list-style: none; }
svg { display: block; flex: none; width: 16px; height: 16px; overflow: visible; }
svg.cr { width: 8px; height: 8px; }
.defs { position: absolute; width: 0; height: 0; }

/* title bar */
.titlebar { display: flex; height: 24px; background: #d8d8d8; }
.qat, .account, .winctl { display: flex; align-items: center; height: 21px; flex: none; }
.logo { width: 18px; height: 17px; margin: 0 1px 0 2px; background: #1c62dd; border-bottom: 2px solid #0a3fa6; border-right: 2px solid #0d48b8; color: #fff; font-weight: 700; font-size: 12px; line-height: 14px; }
.q { width: 20px; height: 20px; }
.q svg { width: 14px; height: 14px; }
.q.home { margin-right: 3px; }
.q.on { background: #cde6ef; border: 1px solid #92c5d8; }
.q.letter { color: #999; font-size: 14px; }
.c { width: 10px; height: 20px; }
.c svg { width: 8px; height: 8px; }
.c.left svg { transform: rotate(90deg); }
.sep { width: 6px; height: 17px; background: linear-gradient(#b4b4b4, #b4b4b4) center / 1px 100% no-repeat; }
.titlebar h1 { flex: 1; text-align: center; line-height: 18px; color: #333; font-size: 10px; }
.account .name { width: 80px; justify-content: flex-start; padding-left: 1px; font-size: 10px; white-space: nowrap; }
.account .sep { margin: 0 2px 0 3px; }
.winctl { margin-left: 43px; padding-right: 1px; }
.winctl button { width: 21px; height: 20px; }
.winctl svg { width: 11px; height: 11px; }

.tabs { display: flex; height: 18px; background: #d8d8d8; flex: none; }
.tabs button { padding: 0 9px; white-space: nowrap; }
.tabs .file { width: 37px; margin: 0 1px; background: #2b7aa9; color: #fff; }
.tabs .active { margin-left: 1px; padding: 0 9px; background: #8fdfc9; color: #234; }
.tabs .ribmode { margin-left: 10px; gap: 3px; }
.ribmode span { width: 12px; height: 7px; border: 1px solid #555; border-radius: 2px; font-size: 8px; line-height: 4px; }
.ribmode svg { width: 8px; height: 8px; }

/* ribbon */
.ribbon { display: flex; height: 79px; flex: none; background: #f4f4f4; }
.panel { display: flex; flex-direction: column; flex: none; border-right: 1px solid #e2ecea; }
.panel h2 { height: 16px; flex: none; line-height: 15px; text-align: center; white-space: nowrap; display: flex; justify-content: center; align-items: center; gap: 2px; }
.panel h2 svg { width: 8px; height: 8px; }
.body { flex: 1; min-height: 0; display: flex; }
.context { flex: 1; display: flex; background: #deeeeb; border-top: 2px solid #96dbc9; padding-left: 2px; }
.context .body { background: #f4f4f4; }
.context .panel h2 { background: #deeeeb; }
.context .smalls { grid-template-rows: repeat(3, 20px); }
.context .smalls button { height: 20px; }
.big { flex-direction: column; justify-content: flex-start; height: 59px; padding-top: 2px; line-height: 14px; }
.big > svg { width: 26px; height: 28px; margin-bottom: 3px; }
.context .big > svg { height: 27px; margin-bottom: 2px; }
.big > svg.cr, .context .big > svg.cr { width: 8px; height: 8px; margin: 1px 0 0; }
.off { color: #bdbdbd; }
.on.big { width: 36px; margin: 2px 0 0 6px; background: #dff0f6; border: 1px solid #9bcadb; padding-top: 1px; }
.on.big > svg { margin-bottom: 1px; }
.smalls { display: grid; grid-template-rows: repeat(3, 21px); }
.smalls button { width: 20px; height: 21px; }
.smalls svg { width: 14px; height: 14px; }
.smalls svg.cr { width: 8px; height: 8px; }
.smalls.wide button { width: auto; justify-content: flex-start; gap: 4px; white-space: nowrap; }
.smalls.three { grid-template-columns: repeat(3, 21px); }
.smalls.three svg.del { width: 11px; height: 11px; }
.stack { flex-direction: column; align-items: center; padding-top: 1px; }
.stack button { height: 30px; }
.i26 { width: 25px; height: 25px; }
.i22 { width: 20px; height: 20px; }
.i16 { width: 14px; height: 14px; }
.p-select { width: 49px; }
.p-props { width: 54px; }
.p-props .lit { width: 31px; background: #dff0f6; border: 1px solid #9bcadb; }
.p-clip { width: 65px; }
.p-clip .big { width: 41px; }
.p-geo { width: 119px; }
.p-geo .wide { width: 66px; padding-left: 5px; }
.mid { align-self: center; margin-left: 1px; }
.p-ctl { width: 46px; }
.p-ctl .big { width: 45px; }
.p-mod { width: 199px; }
.large4 { display: grid; grid-template: repeat(2, 30px) / repeat(4, 33px); margin: 1px 2px 0 0; }
.large4 svg { width: 24px; height: 24px; }
.p-view { width: 54px; }
.smalls.caret button { width: 30px; justify-content: flex-start; padding-left: 4px; gap: 2px; }
.p-meas { width: 47px; }
.p-meas button { gap: 3px; padding-left: 3px; }
.p-create { width: 68px; border: 0; }
.two { display: grid; grid-template: repeat(2, 30px) / repeat(2, 31px); padding: 1px 0 0 2px; }
.p-mode { width: 36px; }
.context .stack { padding: 0; }
.p-comp { width: 170px; }
.p-comp .wide { width: 63px; padding-left: 5px; }
.gallery { width: 105px; height: 57px; margin-top: 1px; border: 1px solid #ccc; display: flex; justify-content: space-between; padding: 3px; }
.gallery div { display: flex; flex-direction: column; justify-content: space-between; padding: 4px 0 0; }
.gallery div svg { width: 7px; height: 7px; }
.p-multi { width: 81px; }
.p-multi .big { width: 80px; }
.p-work { width: 106px; }
.p-work .big { width: 35px; }
.p-tools { width: 162px; }
.p-tools .big { flex: 1; }
.p-tools .div { border-left: 1px solid #dcebe8; }
.options { height: 24px; flex: none; background: #deeeeb; border-bottom: 1px solid #bbb; border-top: 1px solid #d0dedb; padding-left: 7px; font-size: 10px; line-height: 22px; }

/* work area */
main { flex: 1; display: flex; min-height: 0; background: #d8d8d8; }
.head { display: flex; justify-content: space-between; height: 15px; background: #d9d9d9; padding-left: 3px; flex: none; }
.head h2 { line-height: 15px; }
.head button { width: 12px; }
.head svg { width: 10px; height: 10px; }
.browser { width: 268px; flex: none; background: #fff; border-right: 1px solid #aaa; }
.search { display: flex; align-items: center; gap: 7px; margin: 5px 8px 8px; height: 20px; border: 1px solid #ddd; padding-left: 6px; font-size: 10px; }
.search svg { width: 13px; height: 13px; }
.search input { flex: 1; }
::placeholder { color: #999; opacity: 1; }
.tree { display: grid; grid-auto-rows: 1fr; height: 350px; font-size: 10px; color: #555; }
.tree li { display: flex; align-items: center; }
.tree li.sel { background: #f1f1f1; box-shadow: inset 0 0 0 1px #e2e2e2; }
.tree svg { width: 13px; height: 13px; margin-right: 3px; }
.tree b { width: 16px; margin-right: 3px; text-align: center; font-size: 13px; line-height: 12px; font-weight: 600; color: #666; }
.tree b + svg { margin-left: 1px; }
.g { width: 14px; align-self: stretch; position: relative; }
.g::before { content: ""; position: absolute; left: 8px; top: 0; bottom: 0; border-left: 1px dashed #c8c8c8; }
.g.end::before { bottom: 50%; }
.g.br::after { content: ""; position: absolute; left: 9px; right: 0; top: 50%; border-top: 1px dashed #c8c8c8; }
.g.w { width: 33px; }
.g.br.w::after { right: 4px; }

.view { flex: 1; min-width: 0; display: flex; flex-direction: column; background: #ececec; }
.v1 { margin-right: 2px; border-right: 1px solid #aaa; padding-left: 2px; }
.v2 { border-right: 1px solid #aaa; }
.vtabs { height: 17px; display: flex; flex: none; background: #cacaca; }
.vtabs svg { width: 12px; height: 12px; }
.vtabs .idle { width: 106px; background: #d9d9d9; justify-content: flex-start; padding-left: 4px; gap: 7px; }
.vtabs .cur { width: 107px; background: #fff; gap: 6px; font-weight: 700; color: #333; padding: 0 4px; justify-content: space-between; }
.vtabs .xx { width: 10px; height: 10px; }
.vtabs .more { width: 8px; height: 8px; margin: 5px 3px 0 auto; color: #666; }
.stage { flex: 1; min-height: 0; display: flex; }
.canvas { flex: 1; min-width: 0; position: relative; background: #fff; overflow: hidden; }
.canvas.cyan { border: 3px solid #12e8e8; margin: 1px 0 0 1px; }
.draw { position: absolute; inset: 0; width: 100%; height: 100%; }
.cubetxt { font: 700 6px "Liberation Sans", sans-serif; fill: #888; }
.canvas strong { position: absolute; top: 0; left: 0; background: #12f4f4; color: #000; font: 700 10px/12px "Liberation Sans", sans-serif; padding: 0 2px 1px 1px; }
.nav { position: absolute; right: 0; top: 2px; width: 24px; height: 78px; border: 1px solid #bbb; border-radius: 4px; background: #f3f3f3; display: flex; flex-direction: column; align-items: center; justify-content: space-between; padding: 1px 0; }
.cyan .nav { top: 90px; right: -4px; }
.nav i { width: 5px; height: 5px; border: 1px solid #999; border-radius: 50%; align-self: flex-end; margin-right: 2px; }
.nav button { position: relative; }
.nav button svg { width: 14px; height: 14px; }
.nav small { position: absolute; right: -3px; bottom: -3px; font-size: 7px; line-height: 8px; color: #3c6cb0; }
.nav hr { width: 18px; margin: 0; border: 0; border-top: 1px solid #bbb; }
.nav svg.cr { opacity: .6; width: 6px; height: 6px; }
.vs { width: 15px; display: flex; flex-direction: column; justify-content: space-between; align-items: center; padding: 3px 0 1px; background: #e9e9e9; }
.vs svg { width: 10px; height: 10px; }
.vs span { width: 5px; height: 13px; background: #cfcfcf; }
.vbar { height: 17px; flex: none; display: flex; align-items: center; background: #f0f0f0; padding-left: 21px; gap: 7px; }
.vbar output { width: 36px; white-space: nowrap; }
.v2 .vbar { padding-left: 19px; }
.v2 .vbar output { width: 39px; }
.vbar > svg { width: 13px; height: 13px; }
.vbar .boxed { outline: 1px solid #5aa8d0; background: #deeef6; }
.hs { flex: 1; display: flex; justify-content: space-between; align-items: center; }
.hs svg { width: 10px; height: 10px; }
.hs span { width: 14px; height: 5px; background: #d4d4d4; }
.vbar em { width: 8px; font-style: normal; }

/* properties palette */
.props { width: 212px; flex: none; background: #f4f4f4; display: flex; flex-direction: column; border-left: 1px solid #bbb; font-size: 10px; line-height: 13px; margin-left: 1px; }
.props .head { padding-left: 2px; font-size: 9px; }
.type { height: 56px; justify-content: flex-start; text-align: left; gap: 6px; padding-right: 2px; font-size: 9px; }
.thumb { width: 55px; height: 55px; border: 1px solid #bbb; }
.type svg { width: 8px; height: 8px; margin-left: auto; opacity: .6; }
.filter { display: flex; height: 27px; align-items: center; gap: 5px; }
.pick { position: relative; display: flex; align-items: center; }
.pick select { flex: 1; }
.pick svg { position: absolute; right: 2px; width: 10px; height: 10px; pointer-events: none; }
.filter .pick { width: 140px; height: 21px; border-bottom: 1px solid #bbb; padding-left: 2px; }
.filter button { gap: 3px; }
.filter button svg { width: 12px; height: 12px; }
.gridwrap { flex: 1; min-height: 0; display: flex; overflow: hidden; }
table { flex: 1; border-collapse: collapse; table-layout: fixed; background: #fff; align-self: flex-start; }
tr { height: 18px; }
th, td { height: 18px; padding: 0; font-weight: 400; text-align: left; white-space: nowrap; border-bottom: 1px solid #f4f4f4; }
th { width: 93px; padding-left: 8px; border-right: 1px solid #efefef; }
td { padding-left: 1px; }
td:last-child { width: 10px; border-left: 1px solid #f0f0f0; }
.grp th { background: #f1f1f1; padding-left: 2px; position: relative; border: 0; }
.grp svg { position: absolute; right: 3px; top: 2px; width: 8px; height: 8px; }
.ro { color: #9a9a9a; }
td input { width: 92px; height: 17px; border: 1px solid #444; padding-left: 1px; display: block; margin-left: -1px; }
td button { width: 8px; height: 15px; border: 1px solid #bbb; background: #f4f4f4; }
.ps { width: 15px; background: #f0f0f0; display: flex; flex-direction: column; align-items: center; padding: 2px 0; gap: 4px; }
.ps svg { width: 10px; height: 10px; }
.ps span { width: 4px; height: 286px; background: #d2d2d2; margin-bottom: auto; }
.foot { height: 20px; display: flex; align-items: flex-start; justify-content: space-between; padding: 0 3px 0 1px; }
.foot a { color: #2b7aa0; }
.foot button { width: 54px; height: 16px; margin-top: 1px; border: 1px solid #d4d4d4; border-radius: 3px; color: #aaa; }

/* status bar */
.status { height: 21px; flex: none; display: flex; align-items: center; background: #f1f1f1; border-top: 1px solid #ccc; font-size: 10px; }
.status svg { width: 14px; height: 14px; }
.status p { width: 452px; padding-left: 1px; }
.status .chev { width: 10px; height: 10px; margin-left: 166px; }
.status .edit { display: flex; align-items: center; width: 46px; padding-left: 7px; color: #999; }
.status .edit + svg { margin-right: 6px; }
.status .pick { width: 174px; margin-left: 6px; color: #999; font-size: 11px; }
.status .pick svg { width: 10px; height: 10px; }
.sels { margin-left: auto; display: flex; gap: 6px; align-items: center; padding-right: 51px; }
.sels svg:last-of-type { margin-right: -4px; }

/* taskbar */
.taskbar { height: 40px; flex: none; display: flex; justify-content: space-between; background: #202020; color: #fff; }
.apps, .tray { display: flex; align-items: center; }
.apps { padding-left: 176px; }
.apps button { width: 37px; height: 36px; position: relative; flex: none; }
.apps button svg { width: 20px; height: 20px; }
.tsearch { display: flex; align-items: center; width: 181px; height: 26px; margin: 0 2px 0 4px; padding-left: 9px; gap: 9px; border-radius: 13px; background: #f2f2f2; color: #444; font-size: 12px; }
.tsearch > svg { width: 12px; height: 12px; }
.tsearch input { flex: 1; }
.tsearch input::placeholder { color: #555; }
.tsearch span { width: 45px; height: 24px; border-radius: 12px; background: #e4e0d2; display: flex; align-items: center; justify-content: center; }
.tsearch span svg { width: 18px; height: 17px; }
.tile { width: 19px; height: 20px; display: flex; flex-direction: column; align-items: center; font-weight: 700; font-size: 11px; line-height: 13px; }
.tile small { font-size: 5px; line-height: 5px; }
.tile.teal { background: #12919a; font-size: 5px; line-height: 6px; justify-content: center; }
.tile.red { background: #d0103c; }
.tile.mag { background: #a8107c; }
.tile.blue { background: #1c66e0; }
.run::after { content: ""; position: absolute; left: 16px; bottom: 0; width: 5px; height: 2px; border-radius: 1px; background: #aaa; }
.run.now { background: #333; border-radius: 3px; }
.run.now::after { left: 12px; width: 13px; background: #58c0f0; }
.tray { gap: 13px; font-size: 10px; }
.tray svg { width: 14px; height: 14px; }
.lang { text-align: center; width: 22px; line-height: 13px; }
.net { display: flex; gap: 5px; }
.tray time { text-align: right; line-height: 13px; width: 54px; }
.tray .bell { margin-left: -7px; }
.pre { width: 18px; height: 20px; margin: 0 18px 0 0; border-radius: 6px; background: linear-gradient(120deg, #2f8bea, #6a5de8 50%, #e06ab0); display: flex; align-items: flex-end; }
.pre small { background: #f4c020; color: #222; font-size: 6px; line-height: 7px; font-weight: 700; margin: 0 auto; padding: 0 2px; }
```
